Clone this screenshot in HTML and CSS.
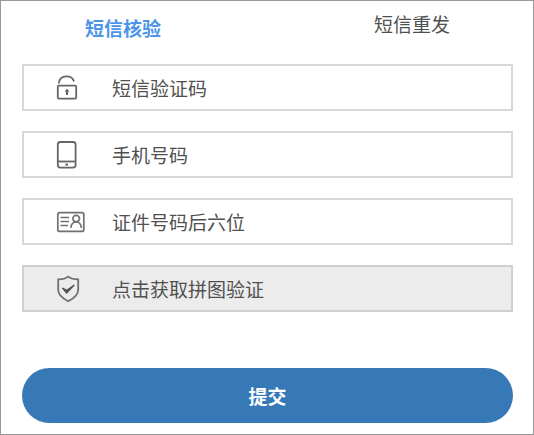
FILE: index.html
```
<!DOCTYPE html>
<html lang="zh-CN">
<head>
  <meta charset="UTF-8" />
  <meta name="viewport" content="width=device-width, initial-scale=1.0"/>
  <title>短信核验</title>
  <link rel="stylesheet" href="styles.css">
</head>
<body>

<div class="page">
  <nav class="tabs">
    <button type="button" class="tab active">短信核验</button>
    <button type="button" class="tab">短信重发</button>
  </nav>

  <form class="verify-form">
    <label class="field">
      <svg class="icon" viewBox="0 0 30 30" fill="none" stroke="#666" stroke-width="1.8">
        <rect x="1.8" y="12.6" width="18.4" height="13" rx="1"/>
        <path d="M2.8 10.5C3.2 6 6.2 3.4 10.5 3.4C14.5 3.4 17.2 5.4 18 8.4"/>
        <path d="M11 16.2V22M9.3 18.2H12.7" stroke-width="2"/>
      </svg>
      <input type="text" placeholder="短信验证码" aria-label="短信验证码">
    </label>

    <label class="field">
      <svg class="icon" viewBox="0 0 30 30" fill="none" stroke="#666" stroke-width="1.8">
        <rect x="1.8" y="2" width="17.8" height="25.6" rx="2.5"/>
        <path d="M2 21.5H19.2"/>
        <path d="M9.4 24.6H12" stroke-width="2"/>
      </svg>
      <input type="tel" placeholder="手机号码" aria-label="手机号码">
    </label>

    <label class="field">
      <svg class="icon" viewBox="0 0 30 30" fill="none" stroke="#707070" stroke-width="1.7">
        <rect x="1.8" y="5.6" width="26" height="18.8" rx="2"/>
        <path d="M4.5 10.5H13M4.5 14.5H13M4.5 18.5H12"/>
        <circle cx="20.2" cy="11.6" r="3.3"/>
        <path d="M14.8 20.8C15.2 17 17 15 20.2 15C23.2 15 25 17 25.4 20.8"/>
      </svg>
      <input type="text" placeholder="证件号码后六位" aria-label="证件号码后六位">
    </label>

    <button type="button" class="field captcha">
      <svg class="icon" viewBox="0 0 30 30" fill="none" stroke="#707070" stroke-width="1.8">
        <path d="M12.2 2.6C9.5 4.8 6 5.3 2.2 5.3V15.5C2.2 20.5 6.5 24.5 12.2 27.2C17.9 24.5 22.2 20.5 22.2 15.5V5.3C18.4 5.3 14.9 4.8 12.2 2.6Z"/>
        <path d="M6.4 14L10.6 19L18.3 11L10.8 16.2Z" fill="#555" stroke="#555" stroke-width="1.2"/>
      </svg>
      <span>点击获取拼图验证</span>
    </button>

    <button type="submit" class="submit-btn">提交</button>
  </form>
</div>

</body>
</html>
```
FILE: styles.css
```
* {
  box-sizing: border-box;
}
body {
  margin: 0;
  background: #fff;
  color: #505050;
  font-family: "Noto Sans CJK SC", sans-serif;
  font-size: 19px;
}
button,
input {
  font: inherit;
  color: inherit;
  border: none;
  padding: 0;
  background: none;
}
button {
  cursor: pointer;
}
.page {
  min-height: 100vh;
  border: 1px solid #999;
  padding: 8px 20px 11px 21px;
}
.tabs {
  display: flex;
  justify-content: space-between;
  align-items: flex-start;
  height: 55px;
  padding: 0 63px;
}
.tab {
  line-height: 30px;
}
.tab.active {
  padding-top: 4px;
  color: #4c94e8;
  font-weight: bold;
}
.verify-form {
  display: flex;
  flex-direction: column;
  gap: 20px;
}
.field {
  display: flex;
  align-items: center;
  gap: 26px;
  height: 47px;
  padding: 0 32px;
  border: 2px solid #d8d8d8;
  line-height: 30px;
}
.field input {
  flex: 1;
  min-width: 0;
  height: 30px;
  outline: none;
}
.field input::placeholder {
  color: #505050;
  opacity: 1;
}
.icon {
  flex: none;
  width: 30px;
  height: 30px;
}
.captcha {
  background: #ececec;
  border-color: #d0d0d0;
  text-align: left;
}
.submit-btn {
  height: 55px;
  margin-top: 36px;
  border-radius: 28px;
  background: #3779b7;
  color: #fff;
  font-weight: bold;
}
```
